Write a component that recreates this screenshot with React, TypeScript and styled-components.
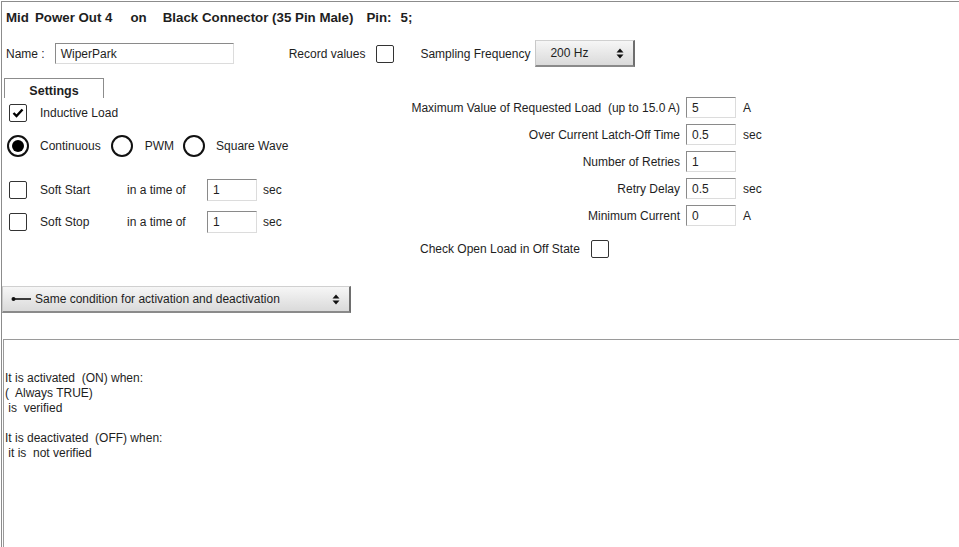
import React from "react";
import styled, { createGlobalStyle } from "styled-components";

const Global = createGlobalStyle`
  html, body { margin: 0; padding: 0; background: #fff; }
  body { font-family: "Liberation Sans", Arial, sans-serif; font-size: 12px; color: #1e1e1e; }
  * { box-sizing: border-box; }
`;

const Frame = styled.div`
  margin: 1px 0 0 1px;
  height: calc(100vh - 1px);
  border-top: 1px solid #8c8c8c;
  border-left: 1px solid #8c8c8c;
  display: flex;
  flex-direction: column;
`;

const Title = styled.div`
  padding: 8px 0 0 4px;
  height: 24px;
  line-height: 16px;
  font-weight: bold;
  font-size: 13.3px;
  display: flex;
  white-space: pre;
`;

const TitlePart = styled.span<{ $ml: number }>`
  margin-left: ${(p) => p.$ml}px;
`;

const NameRow = styled.div`
  margin-top: 14px;
  height: 27px;
  display: flex;
  align-items: center;
`;

const Label = styled.span<{ $ml?: number; $mr?: number; $w?: number }>`
  margin-left: ${(p) => p.$ml ?? 0}px;
  margin-right: ${(p) => p.$mr ?? 0}px;
  ${(p) => (p.$w ? `width: ${p.$w}px; overflow: hidden; flex: none;` : "")}
  white-space: pre;
  line-height: 16px;
`;

const TextInput = styled.div<{ $w: number; $h?: number }>`
  width: ${(p) => p.$w}px;
  height: ${(p) => p.$h ?? 21}px;
  border-top: 1px solid #8a8a8a;
  border-left: 1px solid #8a8a8a;
  border-right: 1px solid #dcdcdc;
  border-bottom: 1px solid #dcdcdc;
  padding-left: 5px;
  display: flex;
  align-items: center;
  background: #fff;
  line-height: 14px;
  flex: none;
`;

const Box = styled.div<{ $ml?: number }>`
  width: 18px;
  height: 18px;
  margin-left: ${(p) => p.$ml ?? 0}px;
  border: 1.5px solid #333;
  border-radius: 2px;
  display: flex;
  align-items: center;
  justify-content: center;
  flex: none;
`;

const Radio = styled.div<{ $ml?: number; $on?: boolean }>`
  width: 22px;
  height: 22px;
  margin-left: ${(p) => p.$ml ?? 0}px;
  border: 2px solid #111;
  border-radius: 50%;
  display: flex;
  align-items: center;
  justify-content: center;
  flex: none;
  &::after {
    content: "";
    display: ${(p) => (p.$on ? "block" : "none")};
    width: 12px;
    height: 12px;
    border-radius: 50%;
    background: #000;
  }
`;

const SelectButton = styled.div<{ $w: number; $h: number; $pl: number }>`
  width: ${(p) => p.$w}px;
  height: ${(p) => p.$h}px;
  background: linear-gradient(#f6f6f6, #dadada);
  border-top: 1px solid #d0d0d0;
  border-left: 1px solid #c8c8c8;
  border-right: 2px solid #6e6e6e;
  border-bottom: 2px solid #8a8a8a;
  display: flex;
  align-items: center;
  padding: 0 9px 0 ${(p) => p.$pl}px;
  white-space: pre;
  flex: none;
`;

const Grow = styled.span`
  flex: 1;
`;

const Main = styled.div`
  margin-top: 11px;
  display: grid;
  grid-template-columns: 398px 1fr;
`;

const LeftCol = styled.div`
  display: flex;
  flex-direction: column;
`;

const Tab = styled.div`
  margin-left: 2px;
  width: 100px;
  height: 20px;
  border: 1px solid #8c8c8c;
  border-bottom: none;
  font-weight: bold;
  text-align: center;
  padding-top: 4px;
  line-height: 16px;
  font-size: 12.5px;
`;

const Row = styled.div<{ $mt: number; $h: number }>`
  margin-top: ${(p) => p.$mt}px;
  height: ${(p) => p.$h}px;
  display: flex;
  align-items: center;
`;

const SoftRow = styled.div<{ $mt: number }>`
  margin-top: ${(p) => p.$mt}px;
  height: 22px;
  display: grid;
  grid-template-columns: 38px 87px 80px 56px auto;
  align-items: center;
`;

const RightCol = styled.div`
  padding-top: 19px;
  display: flex;
  flex-direction: column;
`;

const ParamGrid = styled.div`
  display: grid;
  grid-template-columns: 280px 50px auto;
  column-gap: 6px;
  row-gap: 6px;
  align-items: center;
`;

const ParamLabel = styled.span`
  text-align: right;
  white-space: pre;
`;

const Unit = styled.span`
  margin-left: 1px;
`;

const OpenLoadRow = styled.div`
  margin-top: 14px;
  padding-left: 20px;
  height: 18px;
  display: flex;
  align-items: center;
`;

const ConditionBar = styled.div`
  margin-top: 28px;
`;

const Lower = styled.div`
  margin-top: 26px;
  margin-left: 1px;
  flex: 1;
  border-top: 1px solid #9a9a9a;
  border-left: 1px solid #9a9a9a;
  padding: 31px 0 0 1px;
  line-height: 15px;
  white-space: pre;
`;

const Check = () => (
  <svg width="12" height="10" viewBox="0 0 12 10">
    <path d="M1.5 5 L4.5 8 L10.5 1.5" fill="none" stroke="#000" strokeWidth="2.4" />
  </svg>
);

const UpDown = () => (
  <svg width="8" height="11" viewBox="0 0 8 11">
    <path d="M4 0.5 L7.5 4.5 L0.5 4.5 Z M4 10.5 L7.5 6.5 L0.5 6.5 Z" fill="#111" />
  </svg>
);

const Dash = () => (
  <svg width="20" height="6" viewBox="0 0 20 6">
    <circle cx="2.5" cy="3" r="2" fill="#111" />
    <rect x="2" y="2.2" width="18" height="1.6" fill="#111" />
  </svg>
);

const params = [
  { label: "Maximum Value of Requested Load  (up to 15.0 A)", value: "5", unit: "A" },
  { label: "Over Current Latch-Off Time", value: "0.5", unit: "sec" },
  { label: "Number of Retries", value: "1", unit: "" },
  { label: "Retry Delay", value: "0.5", unit: "sec" },
  { label: "Minimum Current", value: "0", unit: "A" },
];

export default function App() {
  return (
    <>
      <Global />
      <Frame>
        <Title>
          <TitlePart $ml={0}>Mid</TitlePart>
          <TitlePart $ml={6}>Power Out 4</TitlePart>
          <TitlePart $ml={18}>on</TitlePart>
          <TitlePart $ml={16}>Black Connector (35 Pin Male)</TitlePart>
          <TitlePart $ml={13}>Pin:</TitlePart>
          <TitlePart $ml={9}>5;</TitlePart>
        </Title>
        <NameRow>
          <Label $ml={4} $mr={10}>Name :</Label>
          <TextInput $w={179}>WiperPark</TextInput>
          <Label $ml={55} $mr={11}>Record values</Label>
          <Box />
          <Label $ml={26} $w={115}>Sampling Frequency</Label>
          <SelectButton $w={100} $h={27} $pl={14}>
            200 Hz<Grow />
            <UpDown />
          </SelectButton>
        </NameRow>
        <Main>
          <LeftCol>
            <Tab>Settings</Tab>
            <Row $mt={6} $h={18}>
              <Box $ml={7}>
                <Check />
              </Box>
              <Label $ml={13}>Inductive Load</Label>
            </Row>
            <Row $mt={13} $h={22}>
              <Radio $ml={5} $on />
              <Label $ml={11}>Continuous</Label>
              <Radio $ml={10} />
              <Label $ml={12}>PWM</Label>
              <Radio $ml={9} />
              <Label $ml={11}>Square Wave</Label>
            </Row>
            <SoftRow $mt={22}>
              <Box $ml={7} />
              <Label>Soft Start</Label>
              <Label>in a time of</Label>
              <TextInput $w={50} $h={22}>1</TextInput>
              <Label>sec</Label>
            </SoftRow>
            <SoftRow $mt={10}>
              <Box $ml={7} />
              <Label>Soft Stop</Label>
              <Label>in a time of</Label>
              <TextInput $w={50} $h={22}>1</TextInput>
              <Label>sec</Label>
            </SoftRow>
          </LeftCol>
          <RightCol>
            <ParamGrid>
              {params.map((p) => (
                <React.Fragment key={p.label}>
                  <ParamLabel>{p.label}</ParamLabel>
                  <TextInput $w={50}>{p.value}</TextInput>
                  <Unit>{p.unit}</Unit>
                </React.Fragment>
              ))}
            </ParamGrid>
            <OpenLoadRow>
              <Label $mr={11}>Check Open Load in Off State</Label>
              <Box />
            </OpenLoadRow>
          </RightCol>
        </Main>
        <ConditionBar>
          <SelectButton $w={349} $h={27} $pl={8}>
            <Dash />
            <Label $ml={4}>Same condition for activation and deactivation</Label>
            <Grow />
            <UpDown />
          </SelectButton>
        </ConditionBar>
        <Lower>
          {"It is activated  (ON) when:\n(  Always TRUE)\n is  verified\n\nIt is deactivated  (OFF) when:\n it is  not verified"}
        </Lower>
      </Frame>
    </>
  );
}
